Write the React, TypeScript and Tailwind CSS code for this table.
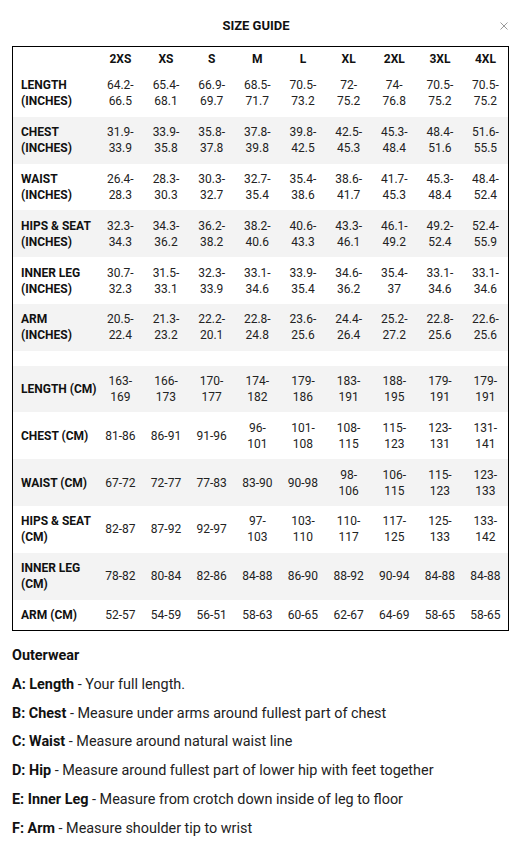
import React from 'react';

const sizes = ['2XS', 'XS', 'S', 'M', 'L', 'XL', '2XL', '3XL', '4XL'];

type Row = { label: string[]; values: string[] } | null;

const rows: Row[] = [
  { label: ['LENGTH', '(INCHES)'], values: ['64.2-66.5', '65.4-68.1', '66.9-69.7', '68.5-71.7', '70.5-73.2', '72-75.2', '74-76.8', '70.5-75.2', '70.5-75.2'] },
  { label: ['CHEST', '(INCHES)'], values: ['31.9-33.9', '33.9-35.8', '35.8-37.8', '37.8-39.8', '39.8-42.5', '42.5-45.3', '45.3-48.4', '48.4-51.6', '51.6-55.5'] },
  { label: ['WAIST', '(INCHES)'], values: ['26.4-28.3', '28.3-30.3', '30.3-32.7', '32.7-35.4', '35.4-38.6', '38.6-41.7', '41.7-45.3', '45.3-48.4', '48.4-52.4'] },
  { label: ['HIPS & SEAT', '(INCHES)'], values: ['32.3-34.3', '34.3-36.2', '36.2-38.2', '38.2-40.6', '40.6-43.3', '43.3-46.1', '46.1-49.2', '49.2-52.4', '52.4-55.9'] },
  { label: ['INNER LEG', '(INCHES)'], values: ['30.7-32.3', '31.5-33.1', '32.3-33.9', '33.1-34.6', '33.9-35.4', '34.6-36.2', '35.4-37', '33.1-34.6', '33.1-34.6'] },
  { label: ['ARM', '(INCHES)'], values: ['20.5-22.4', '21.3-23.2', '22.2-20.1', '22.8-24.8', '23.6-25.6', '24.4-26.4', '25.2-27.2', '22.8-25.6', '22.6-25.6'] },
  null,
  { label: ['LENGTH (CM)'], values: ['163-169', '166-173', '170-177', '174-182', '179-186', '183-191', '188-195', '179-191', '179-191'] },
  { label: ['CHEST (CM)'], values: ['81-86', '86-91', '91-96', '96-101', '101-108', '108-115', '115-123', '123-131', '131-141'] },
  { label: ['WAIST (CM)'], values: ['67-72', '72-77', '77-83', '83-90', '90-98', '98-106', '106-115', '115-123', '123-133'] },
  { label: ['HIPS & SEAT', '(CM)'], values: ['82-87', '87-92', '92-97', '97-103', '103-110', '110-117', '117-125', '125-133', '133-142'] },
  { label: ['INNER LEG', '(CM)'], values: ['78-82', '80-84', '82-86', '84-88', '86-90', '88-92', '90-94', '84-88', '84-88'] },
  { label: ['ARM (CM)'], values: ['52-57', '54-59', '56-51', '58-63', '60-65', '62-67', '64-69', '58-65', '58-65'] },
];

const notes = [
  ['A: Length', 'Your full length.'],
  ['B: Chest', 'Measure under arms around fullest part of chest'],
  ['C: Waist', 'Measure around natural waist line'],
  ['D: Hip', 'Measure around fullest part of lower hip with feet together'],
  ['E: Inner Leg', 'Measure from crotch down inside of leg to floor'],
  ['F: Arm', 'Measure shoulder tip to wrist'],
];

export default function App() {
  return (
    <div className="w-[518px] min-h-[841px] bg-white px-[12px] text-[#222] font-['Roboto',sans-serif]">
      {/* header */}
      <div className="relative h-[46px] flex items-center justify-center pt-[5px]">
        <h1 className="text-[13px] leading-[17px] font-bold text-[#111] pr-[6px]">SIZE GUIDE</h1>
        <svg className="absolute left-[488px] top-[22px]" width="8" height="8" viewBox="0 0 8 8">
          <path d="M0.5 0.5 L7.5 7.5 M7.5 0.5 L0.5 7.5" stroke="#9a9a9a" strokeWidth="1" />
        </svg>
      </div>

      <table className="w-[497px] table-fixed border-collapse border border-black text-[12px] leading-[16px]">
        <colgroup>
          <col className="w-[85px]" />
          {sizes.map((s) => (
            <col key={s} />
          ))}
        </colgroup>
        <thead>
          <tr>
            <th className="py-[3.5px]" />
            {sizes.map((s) => (
              <th key={s} className="py-[3.5px] px-[6px] text-center font-bold text-[#111]">
                {s}
              </th>
            ))}
          </tr>
        </thead>
        <tbody>
          {rows.map((row, idx) =>
            row === null ? (
              <tr key={idx}>
                <td colSpan={10} className="h-[15px] p-0" />
              </tr>
            ) : (
              <tr key={idx} className="even:bg-[#f3f3f3]">
                <td className="py-[7.4px] pl-[8px] pr-[2px] text-left font-bold text-[#111] whitespace-nowrap">
                  {row.label.map((l, i) => (
                    <div key={i}>{l}</div>
                  ))}
                </td>
                {row.values.map((v, i) => (
                  <td key={i} className="py-[7.4px] px-[6px] text-center">
                    {v}
                  </td>
                ))}
              </tr>
            )
          )}
        </tbody>
      </table>

      <div className="mt-[10.6px] text-[14.4px] leading-[28.8px]">
        <p className="font-bold text-[#111]">Outerwear</p>
        {notes.map(([k, v]) => (
          <p key={k}>
            <span className="font-bold text-[#111]">{k}</span> - {v}
          </p>
        ))}
      </div>
    </div>
  );
}
